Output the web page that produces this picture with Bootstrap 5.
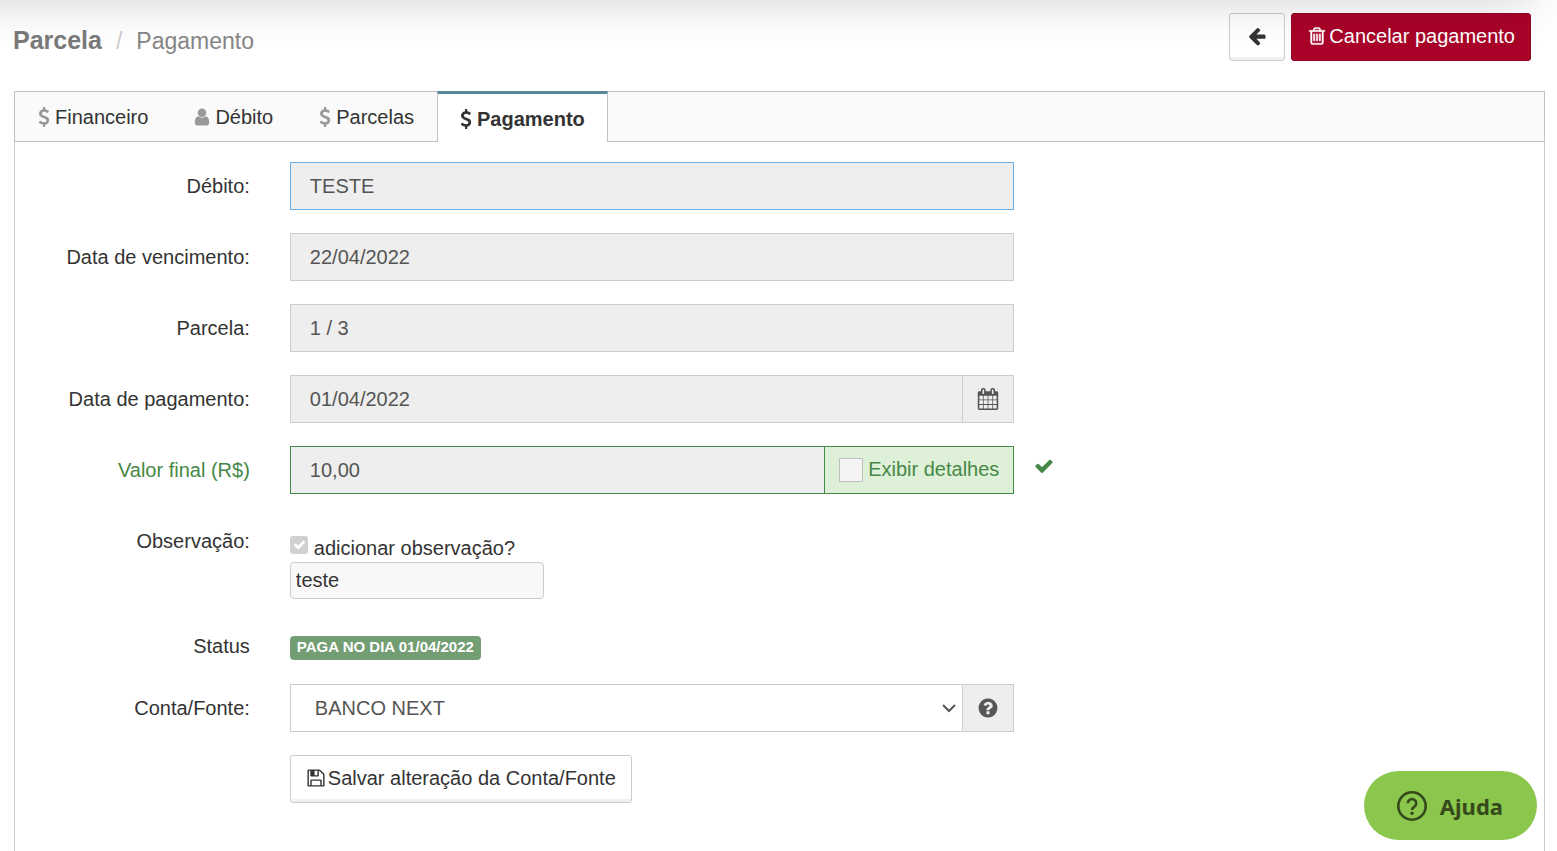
<!DOCTYPE html>
<html lang="pt-BR">
<head>
<meta charset="utf-8">
<meta name="viewport" content="width=device-width, initial-scale=1">
<title>Parcela / Pagamento</title>
<link href="https://cdn.jsdelivr.net/npm/bootstrap@5.3.0/dist/css/bootstrap.min.css" rel="stylesheet">
<style>
  body { font-family: "Liberation Sans", Arial, sans-serif; font-size: 20px; line-height: 28px; color: #333; background: #fff; }
  .icon { width: 20px; height: 20px; fill: currentColor; flex: none; }
  .icon-usd { width: 12px; height: 20px; }
  .icon-user { width: 16px; }
  .icon-lg { width: 22px; height: 22px; }

  /* shadow cast by the site bar above the page */
  .top-shade { position: absolute; left: -60px; right: 24px; top: -80px; height: 80px; box-shadow: 0 0 50px rgba(0,0,0,.19); pointer-events: none; z-index: 5; }

  .page-head { padding: 13px 26px 30px 13px; }
  .crumb { margin-top: 9px; font-size: 23px; line-height: 36px; color: #868686; }
  .crumb strong { font-size: 25px; color: #7a7a7a; }
  .crumb .sep { color: #ccc; margin: 0 14px; }

  .btn { --bs-btn-font-size: 20px; --bs-btn-line-height: 28px; --bs-btn-border-radius: 3px; height: 48px; padding: 0 17px 2px; display: inline-flex; align-items: center; gap: 2px; }
  .btn-plain { --bs-btn-color: #333; --bs-btn-bg: #fff; --bs-btn-border-color: #ccc; --bs-btn-hover-bg: #f2f2f2; --bs-btn-hover-border-color: #bbb; box-shadow: inset 0 -3px 0 #f0f0f0; }
  .btn-cancel { --bs-btn-color: #fff; --bs-btn-bg: #a90329; --bs-btn-border-color: #900323; --bs-btn-hover-color: #fff; --bs-btn-hover-bg: #900323; }
  .btn-cancel, .btn-save { padding: 0 15px 2px; }

  .panel { margin: 0 12px 0 14px; }
  .panel .nav-tabs { background: #fafafa; border: 1px solid #c1c1c1; height: 51px; }
  .panel .nav-link { display: flex; align-items: center; gap: 5px; height: 49px; padding: 0 23px; margin: 0; color: #333; border: 0; border-radius: 0; }
  .panel .nav-link .icon { color: #999; }
  .panel .nav-link.active { height: 51px; margin-top: -1px; padding: 1px 22px 0; font-weight: 700; color: #333; background: #fff; border: 1px solid #c1c1c1; border-top: 3px solid #57889c; border-bottom: 0; }
  .panel .nav-link.active .icon { color: #333; }
  .panel-body { border: 1px solid #ccc; border-width: 0 1px; padding: 20px 0; }

  .form-row { --bs-gutter-x: 40px; margin: 0 0 23px; }
  .form-row.tight { margin-bottom: 14px; }
  .col-form-label { padding-top: 9px; padding-bottom: 9px; line-height: 30px; text-align: right; }
  .form-control, .form-select, .input-group-text { font-size: 20px; line-height: 28px; height: 48px; border-radius: 0; border-color: #ccc; color: #555; }
  .form-control { padding: 0 19px; }
  .form-control:disabled { background: #eee; }
  .form-control.current { border-color: #66afe9; }
  .form-select { padding: 0 40px 0 24px; background-position: right 4px center; background-size: 18px 18px;
    background-image: url("data:image/svg+xml,%3csvg xmlns='http://www.w3.org/2000/svg' viewBox='0 0 18 18'%3e%3cpath fill='none' stroke='%23555' stroke-width='2' d='m3 6 6 6 6-6'/%3e%3c/svg%3e"); }
  .input-group-text { background: #eee; padding: 0 14px; }
  .paid .col-form-label, .paid .input-group-text, .paid .icon { color: #468847; }
  .paid .form-control, .paid .input-group-text { border-color: #468847; }
  .paid .input-group-text { background: #dff0d8; padding: 0 14px 2px; gap: 5px; }
  .box-check { appearance: none; width: 24px; height: 24px; margin: 2px 0 0; border: 1px solid #bfbfbf; background: #f4f4f4; }
  .paid-mark { margin-top: 10px; }

  .note { padding-top: 17px; }
  .note-toggle { gap: 6px; }
  .note .form-check-input { float: none; width: 18px; height: 18px; margin: 2px 0 0; border: 0; border-radius: 3px; background-color: #d1d1d1; opacity: 1; }
  .note .form-check-input:disabled ~ .form-check-label { opacity: 1; }
  .note .form-control { width: 254px; height: 37px; padding: 0 5px; border-radius: 4px; background: #f8f8f8; color: #333; }
  .status-cell { padding-top: 14px; }
  .status-tag { display: block; width: fit-content; height: 24px; padding: 0 7px 2px; border-radius: 4px; font-size: 15px; line-height: 22px; background: #739e73; }

  .help { position: fixed; right: 20px; bottom: 11px; height: 69px; padding: 0 34px 0 33px; gap: 13px; border: 0; border-radius: 35px; background: #8bc64d; color: #35491b; font: 700 22px/30px "Noto Sans", sans-serif; z-index: 10; }
</style>
</head>
<body class="min-vh-100 d-flex flex-column">

<svg class="d-none" aria-hidden="true">
  <symbol id="i-usd" viewBox="0 0 1024 1792"><path d="M978 1185q0 153-99.5 263.5t-258.5 136.5v175q0 14-9 23t-23 9h-135q-13 0-22.5-9.5t-9.5-22.5v-175q-66-9-127.5-31t-101.5-44.5-74-48-46.5-37.5-17.5-18q-17-21-2-41l103-135q7-10 23-12 15-2 24 9l2 2q113 99 243 125 37 8 74 8 81 0 142.5-43t61.5-122q0-28-15-53t-33.5-42-58.5-37.5-66-32-80-32.5q-39-16-61.5-25t-61.5-26.5-62.5-31-56.5-35.5-53.5-42.5-43.5-49-35.5-58-21-66.5-8.5-78q0-138 98-242t255-134v-180q0-13 9.5-22.5t22.5-9.5h135q14 0 23 9t9 23v176q57 6 110.5 23t87 33.5 63.5 37.5 39 29 15 14q17 18 5 38l-81 146q-8 15-23 16-14 3-27-7-3-3-14.5-12t-39-26.5-58.5-32-74.5-26-85.5-11.5q-95 0-155 43t-60 111q0 26 8.5 48t29.5 41.5 39.5 33 56 31 60.5 27 70 27.5q53 20 81 31.5t76 35 75.5 42.5 62 50 53 63.5 31.5 76.5 13 94z"/></symbol>
  <symbol id="i-trash" viewBox="0 0 1792 1792"><path stroke="currentColor" stroke-width="40" d="M704 736v576q0 14-9 23t-23 9h-64q-14 0-23-9t-9-23v-576q0-14 9-23t23-9h64q14 0 23 9t9 23zm256 0v576q0 14-9 23t-23 9h-64q-14 0-23-9t-9-23v-576q0-14 9-23t23-9h64q14 0 23 9t9 23zm256 0v576q0 14-9 23t-23 9h-64q-14 0-23-9t-9-23v-576q0-14 9-23t23-9h64q14 0 23 9t9 23zm128 724v-948h-896v948q0 22 7 40.5t14.5 27 10.5 8.5h832q3 0 10.5-8.5t14.5-27 7-40.5zm-672-1076h448l-48-117q-7-9-17-11h-317q-10 2-17 11zm928 32v64q0 14-9 23t-23 9h-96v948q0 83-47 143.5t-113 60.5h-832q-66 0-113-58.5t-47-141.5v-952h-96q-14 0-23-9t-9-23v-64q0-14 9-23t23-9h309l70-167q15-37 54-63t79-26h320q40 0 79 26t54 63l70 167h309q14 0 23 9t9 23z"/></symbol>
  <symbol id="i-user" viewBox="256 0 1280 1792"><path d="M1536 1399q0 109-62.5 187t-150.5 78h-854q-88 0-150.5-78t-62.5-187q0-85 8.5-160.5t31.5-152 58.5-131 94-89 134.5-34.5q131 128 313 128t313-128q76 0 134.5 34.5t94 89 58.5 131 31.5 152 8.5 160.5zm-256-887q0 159-112.5 271.5t-271.5 112.5-271.5-112.5-112.5-271.5 112.5-271.5 271.5-112.5 271.5 112.5 112.5 271.5z"/></symbol>
  <symbol id="i-left" viewBox="0 0 1792 1792"><path d="M1664 896v128q0 53-32.5 90.5t-84.5 37.5h-704l293 294q38 36 38 90t-38 90l-75 76q-37 37-90 37-52 0-91-37l-651-652q-37-37-37-90 0-52 37-91l651-650q38-38 91-38 52 0 90 38l75 74q38 38 38 91t-38 91l-293 293h704q52 0 84.5 37.5t32.5 90.5z"/></symbol>
  <symbol id="i-check" viewBox="0 0 1792 1792"><path d="M1671 566q0 40-28 68l-724 724-136 136q-28 28-68 28t-68-28l-136-136-362-362q-28-28-28-68t28-68l136-136q28-28 68-28t68 28l294 295 656-657q28-28 68-28t68 28l136 136q28 28 28 68z"/></symbol>
  <symbol id="i-calendar" viewBox="0 0 1792 1792"><path d="M192 1664h288v-288h-288v288zm352 0h320v-288h-320v288zm-352-352h288v-320h-288v320zm352 0h320v-320h-320v320zm-352-384h288v-288h-288v288zm736 736h320v-288h-320v288zm-384-736h320v-288h-320v288zm768 736h288v-288h-288v288zm-384-352h320v-320h-320v320zm-352-864v-288q0-13-9.5-22.5t-22.5-9.5h-64q-13 0-22.5 9.5t-9.5 22.5v288q0 13 9.5 22.5t22.5 9.5h64q13 0 22.5-9.5t9.5-22.5zm736 864h288v-320h-288v320zm-384-384h320v-288h-320v288zm384 0h288v-288h-288v288zm32-480v-288q0-13-9.5-22.5t-22.5-9.5h-64q-13 0-22.5 9.5t-9.5 22.5v288q0 13 9.5 22.5t22.5 9.5h64q13 0 22.5-9.5t9.5-22.5zm384-64v1280q0 52-38 90t-90 38h-1408q-52 0-90-38t-38-90v-1280q0-52 38-90t90-38h128v-96q0-66 47-113t113-47h64q66 0 113 47t47 113v96h384v-96q0-66 47-113t113-47h64q66 0 113 47t47 113v96h128q52 0 90 38t38 90z"/></symbol>
  <symbol id="i-question" viewBox="0 0 1792 1792"><path d="M1024 1376v-192q0-14-9-23t-23-9h-192q-14 0-23 9t-9 23v192q0 14 9 23t23 9h192q14 0 23-9t9-23zm256-672q0-88-55.5-163t-138.5-116-170-41q-243 0-371 213-15 24 8 42l132 100q7 6 19 6 16 0 25-12 53-68 86-92 34-24 86-24 48 0 85.5 26t37.5 59q0 38-20 61t-68 45q-63 28-115.5 86.5t-52.5 125.5v36q0 14 9 23t23 9h192q14 0 23-9t9-23q0-19 21.5-49.5t54.5-49.5q32-18 49-28.5t46-35 44.5-48 28-60.5 12.5-81zm384 192q0 209-103 385.5t-279.5 279.5-385.5 103-385.5-103-279.5-279.5-103-385.5 103-385.5 279.5-279.5 385.5-103 385.5 103 279.5 279.5 103 385.5z"/></symbol>
  <symbol id="i-save" viewBox="0 0 1792 1792"><path d="M512 1536h768v-384h-768v384zm896 0h128v-896q0-14-10-38.5t-20-34.5l-281-281q-10-10-34-20t-39-10v416q0 40-28 68t-68 28h-576q-40 0-68-28t-28-68v-416h-128v1280h128v-416q0-40 28-68t68-28h832q40 0 68 28t28 68v416zm-384-928v-320q0-13-9.5-22.5t-22.5-9.5h-192q-13 0-22.5 9.5t-9.5 22.5v320q0 13 9.5 22.5t22.5 9.5h192q13 0 22.5-9.5t9.5-22.5zm640 32v928q0 40-28 68t-68 28h-1344q-40 0-68-28t-28-68v-1344q0-40 28-68t68-28h928q40 0 88 20t76 48l280 280q28 28 48 76t20 88z"/></symbol>
</svg>

<div class="top-shade"></div>

<header class="page-head d-flex align-items-start justify-content-between">
  <h1 class="crumb fw-normal mb-0 d-flex align-items-baseline"><strong>Parcela</strong><span class="sep">/</span><span>Pagamento</span></h1>
  <div class="d-flex" style="gap:6px">
    <button type="button" class="btn btn-plain" aria-label="Voltar"><svg class="icon"><use href="#i-left"/></svg></button>
    <button type="button" class="btn btn-cancel"><svg class="icon"><use href="#i-trash"/></svg>Cancelar pagamento</button>
  </div>
</header>

<main class="panel flex-grow-1 d-flex flex-column">
  <ul class="nav nav-tabs">
    <li class="nav-item"><a class="nav-link" href="#financeiro"><svg class="icon icon-usd"><use href="#i-usd"/></svg>Financeiro</a></li>
    <li class="nav-item"><a class="nav-link" href="#debito"><svg class="icon icon-user"><use href="#i-user"/></svg>Débito</a></li>
    <li class="nav-item"><a class="nav-link" href="#parcelas"><svg class="icon icon-usd"><use href="#i-usd"/></svg>Parcelas</a></li>
    <li class="nav-item"><a class="nav-link active" aria-current="page" href="#pagamento"><svg class="icon icon-usd"><use href="#i-usd"/></svg>Pagamento</a></li>
  </ul>

  <form class="panel-body flex-grow-1">
    <div class="row form-row">
      <label class="col-2 col-form-label" for="debito">Débito:</label>
      <div class="col-6"><input class="form-control current" id="debito" type="text" value="TESTE" disabled></div>
    </div>
    <div class="row form-row">
      <label class="col-2 col-form-label" for="vencimento">Data de vencimento:</label>
      <div class="col-6"><input class="form-control" id="vencimento" type="text" value="22/04/2022" disabled></div>
    </div>
    <div class="row form-row">
      <label class="col-2 col-form-label" for="parcela">Parcela:</label>
      <div class="col-6"><input class="form-control" id="parcela" type="text" value="1 / 3" disabled></div>
    </div>
    <div class="row form-row">
      <label class="col-2 col-form-label" for="data-pagamento">Data de pagamento:</label>
      <div class="col-6">
        <div class="input-group">
          <input class="form-control" id="data-pagamento" type="text" value="01/04/2022" disabled>
          <span class="input-group-text"><svg class="icon icon-lg"><use href="#i-calendar"/></svg></span>
        </div>
      </div>
    </div>
    <div class="row form-row paid">
      <label class="col-2 col-form-label" for="valor">Valor final (R$)</label>
      <div class="col-6">
        <div class="input-group">
          <input class="form-control" id="valor" type="text" value="10,00" disabled>
          <label class="input-group-text" for="detalhes"><input class="box-check" id="detalhes" type="checkbox">Exibir detalhes</label>
        </div>
      </div>
      <div class="col-auto ps-0"><svg class="icon paid-mark d-block"><use href="#i-check"/></svg></div>
    </div>
    <div class="row form-row">
      <label class="col-2 col-form-label" for="observacao">Observação:</label>
      <div class="col-6 note">
        <div class="note-toggle d-flex">
          <input class="form-check-input" id="add-obs" type="checkbox" checked disabled>
          <label class="form-check-label" for="add-obs">adicionar observação?</label>
        </div>
        <input class="form-control" id="observacao" type="text" value="teste" disabled>
      </div>
    </div>
    <div class="row form-row tight">
      <div class="col-2 col-form-label">Status</div>
      <div class="col-6 status-cell"><span class="badge status-tag">PAGA NO DIA 01/04/2022</span></div>
    </div>
    <div class="row form-row">
      <label class="col-2 col-form-label" for="conta">Conta/Fonte:</label>
      <div class="col-6">
        <div class="input-group">
          <select class="form-select" id="conta"><option>BANCO NEXT</option></select>
          <span class="input-group-text"><svg class="icon icon-lg"><use href="#i-question"/></svg></span>
        </div>
      </div>
    </div>
    <div class="row form-row">
      <div class="col-6 offset-2"><button type="button" class="btn btn-plain btn-save"><svg class="icon"><use href="#i-save"/></svg>Salvar alteração da Conta/Fonte</button></div>
    </div>
  </form>
</main>

<button type="button" class="help d-flex align-items-center">
  <svg width="30" height="30" viewBox="0 0 30 30" fill="none" stroke="currentColor" aria-hidden="true"><circle cx="15" cy="15" r="13.7" stroke-width="2.6"/><path d="M10.8 12.2a4.2 4.2 0 1 1 6.3 3.7c-1.5.9-2.1 1.600-2.1 3.1" stroke-width="2.6"/><circle cx="15" cy="22.3" r="1.7" fill="currentColor" stroke="none"/></svg>
  Ajuda
</button>

<script src="https://cdn.jsdelivr.net/npm/bootstrap@5.3.0/dist/js/bootstrap.bundle.min.js"></script>
</body>
</html>
